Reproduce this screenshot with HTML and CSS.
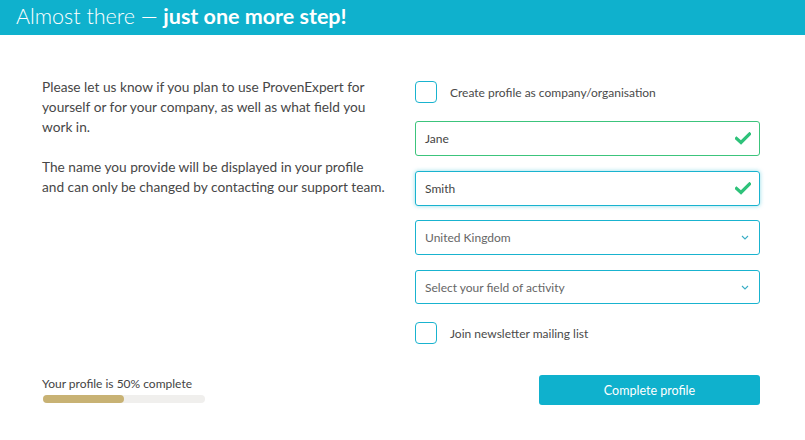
FILE: index.html
```html
<!DOCTYPE html>
<html lang="en">
<head>
<meta charset="utf-8">
<title>Almost there</title>
<link rel="stylesheet" href="styles.css">
</head>
<body>
<header class="topbar">
  <h1 class="title"><span class="light">Almost there —</span> <strong>just one more step!</strong></h1>
</header>
<main class="content">
  <section class="intro">
    <p>Please let us know if you plan to use ProvenExpert for yourself or for your company, as well as what field you work in.</p>
    <p>The name you provide will be displayed in your profile and can only be changed by contacting our support team.</p>
  </section>
  <form class="form">
    <label class="check-row"><span class="box"></span><span>Create profile as company/organisation</span></label>
    <div class="field valid">
      <span class="value">Jane</span>
      <svg class="tick" width="16" height="13" viewBox="0 0 16 13"><path d="M1.5 6.5 L6 10.5 L14.5 2" fill="none" stroke="#2ec27a" stroke-width="3.2" stroke-linecap="square"/></svg>
    </div>
    <div class="field focus">
      <span class="value">Smith</span>
      <svg class="tick" width="16" height="13" viewBox="0 0 16 13"><path d="M1.5 6.5 L6 10.5 L14.5 2" fill="none" stroke="#2ec27a" stroke-width="3.2" stroke-linecap="square"/></svg>
    </div>
    <div class="field select">
      <span class="value muted">United Kingdom</span>
      <svg class="chev" width="8" height="5" viewBox="0 0 8 5"><path d="M1 1 L4 4 L7 1" fill="none" stroke="#3aaec6" stroke-width="1.1"/></svg>
    </div>
    <div class="field select last-field">
      <span class="value muted">Select your field of activity</span>
      <svg class="chev" width="8" height="5" viewBox="0 0 8 5"><path d="M1 1 L4 4 L7 1" fill="none" stroke="#3aaec6" stroke-width="1.1"/></svg>
    </div>
    <label class="check-row last"><span class="box"></span><span>Join newsletter mailing list</span></label>
  </form>
</main>
<footer class="bottom">
  <div class="progress">
    <div class="progress-label">Your profile is 50% complete</div>
    <div class="bar"><div class="fill" style="width:50%"></div></div>
  </div>
  <button class="submit" type="button">Complete profile</button>
</footer>
</body>
</html>
```

FILE: styles.css
```css
* { box-sizing: border-box; }
html, body { margin: 0; padding: 0; background: #fff; }
body {
  font-family: Lato, "Open Sans", Arial, sans-serif;
  color: #444;
  width: 805px;
  height: 440px;
  overflow: hidden;
}
.topbar {
  background: #0fb1cd;
  height: 35px;
  padding-left: 16px;
}
.title {
  margin: 0;
  font-size: 21.5px;
  line-height: 33px;
  color: #fff;
  font-weight: 400;
}
.title .light { font-weight: 300; }
.title strong { font-weight: 700; }
.content {
  display: flex;
  justify-content: space-between;
  padding: 42px 45px 0 42px;
}
.intro {
  width: 347px;
  font-size: 13.7px;
  line-height: 20px;
  color: #474747;
}
.intro p { margin: 0 0 20px 0; }
.form {
  width: 345px;
  display: flex;
  flex-direction: column;
  padding-top: 4px;
}
.check-row {
  display: flex;
  align-items: center;
  height: 22px;
  font-size: 12px;
  color: #4a4a4a;
  margin-bottom: 18px;
}
.check-row.last { margin-top: 18px; margin-bottom: 0; }
.box {
  width: 22px;
  height: 22px;
  border: 1px solid #19b3cf;
  border-radius: 4px;
  margin-right: 13px;
  flex: none;
}
.field {
  height: 35px;
  border: 1px solid #19b3cf;
  border-radius: 3px;
  display: flex;
  align-items: center;
  justify-content: space-between;
  padding: 0 10px 0 9px;
  font-size: 12px;
  color: #444;
  margin-bottom: 15px;
}
.field.last-field { margin-bottom: 0; height: 34px; }
.field.valid { border-color: #3cc47c; }
.field.focus { box-shadow: 0 0 4px rgba(15, 177, 205, 0.45); margin-bottom: 14px; }
.value.muted { color: #666; }
.tick { margin-right: -2px; }
.chev { margin-right: 0; }
.bottom {
  display: flex;
  justify-content: space-between;
  align-items: flex-end;
  padding: 0 45px 0 42px;
  margin-top: 31px;
}
.progress { width: 163px; margin-bottom: 2px; }
.progress-label {
  font-size: 12px;
  line-height: 16px;
  color: #444;
  margin-bottom: 3px;
  white-space: nowrap;
}
.bar {
  height: 8px;
  background: #f0efed;
  border-radius: 4px;
  margin-left: 1px;
}
.fill {
  height: 8px;
  background: #c8b274;
  border-radius: 4px;
}
.submit {
  width: 221px;
  height: 30px;
  border: 0;
  border-radius: 3px;
  background: #0fb1cd;
  color: #fff;
  font-family: inherit;
  font-size: 12.5px;
  padding: 0;
}
```
